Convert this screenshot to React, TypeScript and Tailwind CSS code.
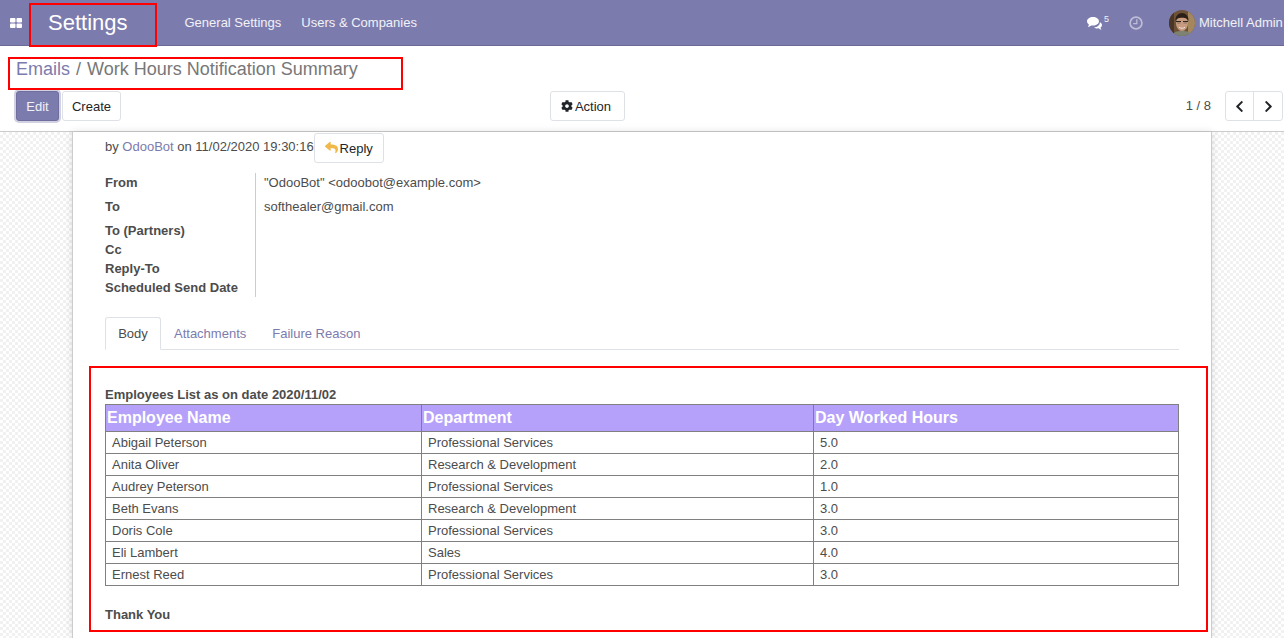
import { FaChevronLeft, FaChevronRight, FaCog, FaReply } from 'react-icons/fa'

const employees = [
  ['Abigail Peterson', 'Professional Services', '5.0'],
  ['Anita Oliver', 'Research & Development', '2.0'],
  ['Audrey Peterson', 'Professional Services', '1.0'],
  ['Beth Evans', 'Research & Development', '3.0'],
  ['Doris Cole', 'Professional Services', '3.0'],
  ['Eli Lambert', 'Sales', '4.0'],
  ['Ernest Reed', 'Professional Services', '3.0'],
]

function Avatar() {
  return (
    <svg viewBox="0 0 26 26" className="w-[26px] h-[26px] rounded-full shrink-0">
      <rect width="26" height="26" fill="#6e5238" />
      <rect x="19" width="7" height="26" fill="#a5875d" />
      <rect width="5" height="26" fill="#4a3626" />
      <path d="M3 26c1-4 5-5 10-5s9 1 10 5z" fill="#7d8273" />
      <ellipse cx="13" cy="13.500" rx="6" ry="7.500" fill="#c79b80" />
      <path d="M6.500 11c-.5-5 3-8 6.500-8s7 3 6.500 8c-1-2-2.500-3.200-6.500-3.200s-5.500 1.200-6.500 3.200z" fill="#2b1f18" />
      <path d="M7 11.500h5M14 11.500h5" stroke="#2a2320" strokeWidth="1.200" />
      <path d="M8 13h3.500M14.500 13h3.500" stroke="#8d6f60" strokeWidth="1" />
      <path d="M10 17.300c2 1.300 4 1.300 6 0" stroke="#f0e0d4" strokeWidth="1" fill="none" />
    </svg>
  )
}

function AppsIcon() {
  return (
    <svg viewBox="0 0 12 10" className="w-3 h-2.5" fill="#fff">
      <rect width="5.500" height="4.500" rx="1" />
      <rect x="6.500" width="5.500" height="4.500" rx="1" />
      <rect y="5.500" width="5.500" height="4.500" rx="1" />
      <rect x="6.500" y="5.500" width="5.500" height="4.500" rx="1" />
    </svg>
  )
}

function CommentsIcon() {
  return (
    <svg viewBox="0 0 15 13" className="w-[15px] h-[13px] mt-px" fill="#fff">
      <path d="M6 0c3.300 0 6 1.900 6 4.300S9.300 8.600 6 8.600c-.6 0-1.200-.1-1.700-.2C3.300 9.300 2 9.800.8 10c.6-.8 1-1.600 1.100-2.500C.700 6.700 0 5.600 0 4.300 0 1.900 2.700 0 6 0z" />
      <path d="M12.900 5.200C14.200 5.800 15 6.800 15 8c0 1-.6 1.900-1.500 2.500.1.800.5 1.600 1.100 2.300-1.100-.2-2.200-.7-3-1.500-.4.100-.8.100-1.200.1-1.300 0-2.500-.4-3.300-1 3.200-.2 6.100-2.100 5.800-5.700z" />
    </svg>
  )
}

function ClockIcon() {
  return (
    <svg viewBox="0 0 14 14" className="w-[14px] h-[14px] ml-5" fill="none" stroke="#fff" strokeOpacity="0.5">
      <circle cx="7" cy="7" r="5.900" strokeWidth="1.700" />
      <path d="M7.800 3.300v4.300H4.200" strokeWidth="1.300" />
    </svg>
  )
}

function TopBar() {
  return (
    <header className="h-[46px] shrink-0 bg-[#7c7bad] border-b border-[#6b6a96] flex items-center text-white">
      <div className="w-8 flex justify-center"><AppsIcon /></div>
      <span className="ml-4 text-[22px] leading-none w-[136.5px]">Settings</span>
      <nav className="flex gap-5 text-[13px] text-white/90">
        <span>General Settings</span>
        <span>Users &amp; Companies</span>
      </nav>
      <div className="ml-auto flex items-center min-w-0 w-[197px] shrink-0">
        <CommentsIcon />
        <span className="text-[9px] ml-[2px] -mt-1.5 text-white/90">5</span>
        <ClockIcon />
        <span className="ml-[26px]"><Avatar /></span>
        <span className="ml-1 text-[13px] whitespace-nowrap text-white/90">Mitchell Admin</span>
      </div>
    </header>
  )
}

function ControlPanel() {
  return (
    <div className="h-[86px] shrink-0 bg-white border-b border-[#ccc] pl-4 pr-px">
      <div className="h-[45px] pt-[12px] text-[18px] leading-[22px] text-[#777]">
        <span className="text-[#7c7bad]">Emails</span>
        <span className="mx-[6px]">/</span>
        <span>Work Hours Notification Summary</span>
      </div>
      <div className="flex items-center h-[30px] text-[13px]">
        <button className="w-[43px] h-[30px] pt-px rounded-[3px] bg-[#7c7bad] text-white/90 border border-[#6f6e9e] shadow-[0_0_0_2px_rgba(124,123,173,0.35)]">Edit</button>
        <button className="w-[59px] h-[30px] pt-px ml-[3px] rounded-[3px] bg-white border border-[#dee2e6] text-[#212529]">Create</button>
        <button className="w-[75px] h-[30px] pt-px ml-[429px] rounded-[3px] bg-white border border-[#dee2e6] text-[#212529] flex items-center justify-center gap-[2px] pr-[3px]">
          <FaCog className="w-3 h-3 -mt-px" />
          Action
        </button>
        <span className="ml-auto text-[#4c4c4c]">1 / 8</span>
        <div className="ml-[14px] w-[58px] h-[30px] flex rounded-[3px] border border-[#dee2e6] text-[#212529]">
          <span className="flex-1 flex items-center justify-center border-r border-[#dee2e6]"><FaChevronLeft className="w-[13px] h-[13px]" /></span>
          <span className="w-[28px] flex items-center justify-center"><FaChevronRight className="w-[13px] h-[13px]" /></span>
        </div>
      </div>
    </div>
  )
}

function EmailHeader() {
  return (
    <>
      <div className="flex items-start h-[41px]">
        <span className="mt-[6px] leading-[18px]">
          by <span className="text-[#7c7bad]">OdooBot</span> on 11/02/2020 19:30:16
        </span>
        <button className="mt-px w-[70px] h-[30px] pt-[2px] rounded-[3px] border border-[#dee2e6] bg-white text-[#212529] flex items-center justify-center gap-[2px]">
          <FaReply className="w-[13px] h-[13px] -mt-[3px] text-[#f0b94a]" />
          Reply
        </button>
      </div>
      <div className="flex h-[124px]">
        <div className="w-[151px] border-r border-[#ccc] font-bold leading-[19px]">
          <div className="h-6">From</div>
          <div className="h-6">To</div>
          <div>To (Partners)</div>
          <div>Cc</div>
          <div>Reply-To</div>
          <div className="whitespace-nowrap">Scheduled Send Date</div>
        </div>
        <div className="pl-2 leading-[19px]">
          <div className="h-6">"OdooBot" &lt;odoobot@example.com&gt;</div>
          <div className="h-6">softhealer@gmail.com</div>
        </div>
      </div>
    </>
  )
}

function Tabs() {
  return (
    <div className="mt-5 h-[33px] flex border-b border-[#dee2e6] text-[#7c7bad]">
      <span className="w-14 h-[33px] border border-b-white border-[#dee2e6] rounded-t-[3px] text-[#4c4c4c] flex items-center justify-center bg-white">Body</span>
      <span className="ml-[13px] flex items-center h-[33px]">Attachments</span>
      <span className="ml-[26px] flex items-center h-[33px]">Failure Reason</span>
    </div>
  )
}

function EmployeeTable() {
  return (
    <table className="w-[1074px] table-fixed border-collapse border border-[#808080]">
      <colgroup>
        <col className="w-[316px]" />
        <col className="w-[392px]" />
        <col />
      </colgroup>
      <thead>
        <tr className="h-[27px] bg-[#b5a1fa] text-white text-[16px] font-bold text-left">
          <th className="border border-[#808080] pl-px">Employee Name</th>
          <th className="border border-[#808080] pl-px">Department</th>
          <th className="border border-[#808080] pl-px">Day Worked Hours</th>
        </tr>
      </thead>
      <tbody>
        {employees.map((row) => (
          <tr key={row[0]} className="h-[22px]">
            {row.map((cell, i) => (
              <td key={i} className="border border-[#808080] pl-[6px] py-0 leading-[21px]">{cell}</td>
            ))}
          </tr>
        ))}
      </tbody>
    </table>
  )
}

export default function App() {
  return (
    <div className="relative h-[638px] w-[1284px] overflow-hidden flex flex-col bg-white font-['Liberation_Sans',Arial,sans-serif] text-[13px] text-[#4c4c4c]">
      <TopBar />
      <ControlPanel />
      <main className="flex-1 min-h-0 pl-[72px] bg-[repeating-conic-gradient(#f1f1f1_0_25%,#ffffff_0_50%)] bg-[length:6px_6px]">
        <div className="w-[1140px] h-full bg-white border-x border-[#ccc] px-8 shadow-[0_0_8px_rgba(0,0,0,0.12)]">
          <EmailHeader />
          <Tabs />
          <p className="mt-[36px] font-bold leading-[18px]">Employees List as on date 2020/11/02</p>
          <EmployeeTable />
          <p className="mt-[20px] font-bold leading-[18px]">Thank You</p>
        </div>
      </main>

      {/* hand-drawn annotation boxes from the screenshot */}
      <div className="absolute left-[29px] top-[3px] w-[128px] h-[44px] border-2 border-[#f00]" />
      <div className="absolute left-[8px] top-[57px] w-[395px] h-[33px] border-2 border-[#f00]" />
      <div className="absolute left-[89px] top-[366px] w-[1119px] h-[266px] border-2 border-[#f00]" />
    </div>
  )
}
